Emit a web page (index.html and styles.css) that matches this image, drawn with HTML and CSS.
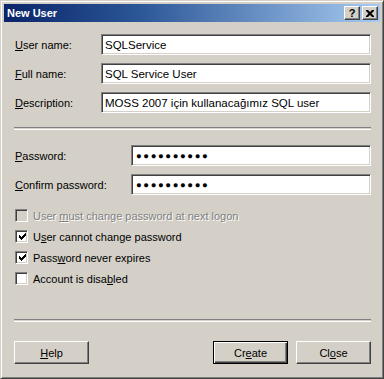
FILE: index.html
```html
<!DOCTYPE html>
<html lang="en">
<head>
    <meta charset="UTF-8">
    <title>New User</title>
    <link rel="stylesheet" href="styles.css">
</head>
<body>
    <div class="window">
        <div class="titlebar">
            <span class="title">New User</span>
            <div class="caption-buttons">
                <span class="cap-btn">?</span>
                <span class="cap-btn close">
                    <svg width="8" height="7" viewBox="0 0 8 7"><path d="M0 0h2l2 2 2-2h2v1l-2.5 2.5L8 6v1H6L4 5 2 7H0V6l2.5-2.5L0 1z" fill="#000"/></svg>
                </span>
            </div>
        </div>
        <div class="content">
            <div class="fields names">
                <label class="row"><span class="lbl"><u>U</u>ser name:</span><span class="field">SQLService</span></label>
                <label class="row"><span class="lbl"><u>F</u>ull name:</span><span class="field">SQL Service User</span></label>
                <label class="row"><span class="lbl"><u>D</u>escription:</span><span class="field">MOSS 2007 için kullanacağımız SQL user</span></label>
            </div>
            <div class="separator"></div>
            <div class="fields passwords">
                <label class="row"><span class="lbl"><u>P</u>assword:</span><span class="field dots">●●●●●●●●●●</span></label>
                <label class="row"><span class="lbl"><u>C</u>onfirm password:</span><span class="field dots">●●●●●●●●●●</span></label>
            </div>
            <div class="checks">
                <div class="check disabled"><span class="box"></span><span>User <u>m</u>ust change password at next logon</span></div>
                <div class="check"><span class="box checked"></span><span>U<u>s</u>er cannot change password</span></div>
                <div class="check"><span class="box checked"></span><span>Pass<u>w</u>ord never expires</span></div>
                <div class="check"><span class="box"></span><span>Account is disa<u>b</u>led</span></div>
            </div>
            <div class="separator bottom"></div>
            <div class="buttons">
                <span class="btn"><u>H</u>elp</span>
                <span class="spacer"></span>
                <span class="btn default">Cr<u>e</u>ate</span>
                <span class="btn">Cl<u>o</u>se</span>
            </div>
        </div>
    </div>
</body>
</html>
```

FILE: styles.css
```css
body {
    margin: 0;
    background: #d4d0c8;
    font-family: "Liberation Sans", Arial, sans-serif;
    font-size: 11px;
    color: #000;
}
.window {
    width: 384px;
    height: 379px;
    box-sizing: border-box;
    background: #d4d0c8;
    border-top: 1px solid #d4d0c8;
    border-left: 1px solid #d4d0c8;
    border-right: 1px solid #404040;
    border-bottom: 1px solid #404040;
    box-shadow: inset 1px 1px 0 #fff, inset -1px -1px 0 #808080;
    padding: 3px 3px 3px 3px;
    display: flex;
    flex-direction: column;
}
.titlebar {
    height: 18px;
    display: flex;
    align-items: center;
    justify-content: space-between;
    background: linear-gradient(to right, #0a246a 0%, #2a5596 35%, #a6caf0 100%);
    padding: 0 2px 0 3px;
}
.title {
    color: #fff;
    font-weight: bold;
    font-size: 11px;
}
.caption-buttons {
    display: flex;
    gap: 2px;
}
.cap-btn {
    width: 16px;
    height: 14px;
    box-sizing: border-box;
    background: #d4d0c8;
    border-top: 1px solid #fff;
    border-left: 1px solid #fff;
    border-right: 1px solid #404040;
    border-bottom: 1px solid #404040;
    box-shadow: inset -1px -1px 0 #808080;
    display: flex;
    align-items: center;
    justify-content: center;
    font-weight: bold;
    font-size: 11px;
    line-height: 1;
}
.content {
    flex: 1;
    display: flex;
    flex-direction: column;
    padding: 12px 9px 0 10px;
}
.fields {
    display: flex;
    flex-direction: column;
    gap: 8px;
}
.row {
    display: flex;
    align-items: center;
    height: 21px;
}
.lbl {
    padding-left: 1px;
}
.names .lbl {
    width: 86px;
}
.passwords .lbl {
    width: 116px;
}
.field {
    flex: 1;
    height: 21px;
    box-sizing: border-box;
    background: #fff;
    border-top: 1px solid #808080;
    border-left: 1px solid #808080;
    border-right: 1px solid #fff;
    border-bottom: 1px solid #fff;
    box-shadow: inset 1px 1px 0 #404040, inset -1px -1px 0 #d4d0c8;
    padding: 0 3px;
    display: flex;
    align-items: center;
    font-size: 11.5px;
    white-space: nowrap;
}
.dots {
    font-size: 9.5px;
    letter-spacing: 1.6px;
    padding-left: 4px;
}
.separator {
    height: 1px;
    border-top: 1px solid #808080;
    border-bottom: 1px solid #fff;
    margin: 14px 0 15px 0;
}
.checks {
    display: flex;
    flex-direction: column;
    gap: 8px;
    margin-top: 14px;
}
.check {
    display: flex;
    align-items: center;
    gap: 5px;
    height: 13px;
    padding-left: 1px;
}
.box {
    width: 13px;
    height: 13px;
    box-sizing: border-box;
    background: #fff;
    border-top: 1px solid #808080;
    border-left: 1px solid #808080;
    border-right: 1px solid #fff;
    border-bottom: 1px solid #fff;
    box-shadow: inset 1px 1px 0 #404040, inset -1px -1px 0 #d4d0c8;
    position: relative;
}
.box.checked::after {
    content: "";
    position: absolute;
    left: 3px;
    top: 2px;
    width: 7px;
    height: 7px;
    background: url("data:image/svg+xml;utf8,<svg xmlns='http://www.w3.org/2000/svg' width='7' height='7'><path d='M0 2h1v1h1v1h1V3h1V2h1V1h1V0h1v3h-1v1h-1v1h-1v1h-1v1H2V6H1V5H0z' fill='black'/></svg>") no-repeat;
}
.check.disabled {
    color: #808080;
    text-shadow: 1px 1px 0 #fff;
}
.check.disabled .box {
    background: #d4d0c8;
}
.separator.bottom {
    margin: 34px 0 19px 0;
}
.buttons {
    display: flex;
    gap: 8px;
}
.spacer {
    flex: 1;
}
.btn {
    width: 75px;
    height: 23px;
    box-sizing: border-box;
    background: #d4d0c8;
    border-top: 1px solid #fff;
    border-left: 1px solid #fff;
    border-right: 1px solid #404040;
    border-bottom: 1px solid #404040;
    box-shadow: inset -1px -1px 0 #808080;
    display: flex;
    align-items: center;
    justify-content: center;
}
.btn.default {
    border: 1px solid #000;
    box-shadow: inset 1px 1px 0 #fff, inset -1px -1px 0 #404040, inset -2px -2px 0 #808080;
}
```
